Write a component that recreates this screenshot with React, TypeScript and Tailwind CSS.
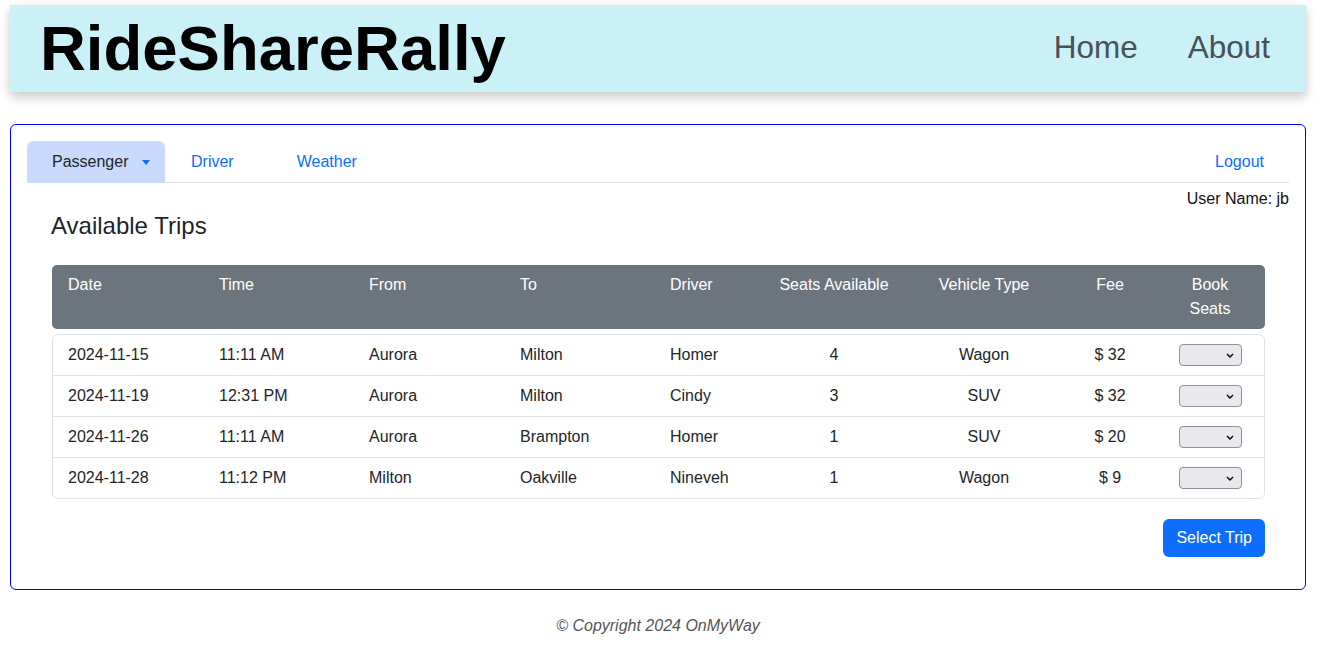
const trips = [
  { date: "2024-11-15", time: "11:11 AM", from: "Aurora", to: "Milton", driver: "Homer", seats: 4, vehicle: "Wagon", fee: 32 },
  { date: "2024-11-19", time: "12:31 PM", from: "Aurora", to: "Milton", driver: "Cindy", seats: 3, vehicle: "SUV", fee: 32 },
  { date: "2024-11-26", time: "11:11 AM", from: "Aurora", to: "Brampton", driver: "Homer", seats: 1, vehicle: "SUV", fee: 20 },
  { date: "2024-11-28", time: "11:12 PM", from: "Milton", to: "Oakville", driver: "Nineveh", seats: 1, vehicle: "Wagon", fee: 9 },
]

// column templates: body is 2px narrower because of its border
const headCols = "grid grid-cols-[151px_150px_151px_150px_110px_140px_160px_92px_108px]"
const bodyCols = "grid grid-cols-[150px_150px_151px_150px_110px_140px_160px_92px_107px]"

function FakeSelect() {
  return (
    <div className="w-[63px] h-[22px] bg-[#e9e9ed] border border-[#8f8f9d] rounded-[4px] flex items-center justify-end pr-[7px]">
      <svg width="8" height="5" viewBox="0 0 8 5">
        <path d="M1 1 L4 4 L7 1" fill="none" stroke="#000" strokeWidth="1.4" />
      </svg>
    </div>
  )
}

export default function App() {
  return (
    <div className="font-['Liberation_Sans',Arial,sans-serif] text-[#212529] bg-white min-h-[660px] pt-[5px] pl-[10px] pr-[12px]">
      {/* top bar */}
      <header className="h-[87px] bg-[#caf0f8] shadow-[0_5px_10px_rgba(0,0,0,0.22)] flex items-center justify-between pl-[30px] pr-[36px]">
        <h1 className="text-[63.5px] font-bold text-black leading-none">RideShareRally</h1>
        <nav className="flex gap-[50px] text-[31.5px] leading-none text-[#495057] -mt-[2px]">
          <a>Home</a>
          <a>About</a>
        </nav>
      </header>

      <main className="mt-[32px] border border-[#0000ff] rounded-[6px] px-4 pt-4 pb-[32px]">
        {/* tabs */}
        <div className="flex items-end border-b border-[#dee2e6] h-[42px]">
          <div className="w-[138px] h-[42px] -mb-px pl-[25px] bg-[#cadafc] rounded-t-[6px] flex items-center">
            <span>Passenger</span>
            <span className="ml-[13px] mt-[1px] w-0 h-0 border-t-[5px] border-t-[#0d6efd] border-x-[4.5px] border-x-transparent" />
          </div>
          <a className="h-[41px] pl-[26px] pr-[25px] flex items-center text-[#0d6efd]">Driver</a>
          <a className="h-[41px] pl-[38px] pr-[25px] flex items-center text-[#0d6efd]">Weather</a>
          <a className="h-[41px] ml-auto pr-[25px] flex items-center text-[#0d6efd]">Logout</a>
        </div>
        <div className="text-right leading-6 mt-[4px] text-[#111]">User Name: jb</div>

        <div className="pl-[25px] pr-[24px]">
          <h2 className="text-2xl leading-[29px] -ml-px mb-[25px]">Available Trips</h2>

          <div className={`${headCols} bg-[#6c757d] text-white rounded-[5px] py-2 leading-6`}>
            <div className="px-4">Date</div>
            <div className="px-4">Time</div>
            <div className="px-4">From</div>
            <div className="px-4">To</div>
            <div className="px-4">Driver</div>
            <div className="text-center whitespace-nowrap">Seats Available</div>
            <div className="text-center">Vehicle Type</div>
            <div className="text-center">Fee</div>
            <div className="px-4 text-center">Book Seats</div>
          </div>

          <div className="mt-[5px] border border-[#dee2e6] rounded-[6px] divide-y divide-[#dee2e6]">
            {trips.map((t) => (
              <div key={t.date} className={`${bodyCols} h-10 box-content items-center`}>
                <div className="pl-[15px]">{t.date}</div>
                <div className="px-4">{t.time}</div>
                <div className="px-4">{t.from}</div>
                <div className="px-4">{t.to}</div>
                <div className="px-4">{t.driver}</div>
                <div className="text-center">{t.seats}</div>
                <div className="text-center">{t.vehicle}</div>
                <div className="text-center">$ {t.fee}</div>
                <div className="flex justify-center pl-px">
                  <FakeSelect />
                </div>
              </div>
            ))}
          </div>

          <div className="flex justify-end mt-[20px]">
            <button className="bg-[#0d6efd] text-white rounded-[6px] px-[13px] py-[7px] leading-6">Select Trip</button>
          </div>
        </div>
      </main>

      <footer className="text-center italic text-[#555] mt-[24px] leading-6">© Copyright 2024 OnMyWay</footer>
    </div>
  )
}
